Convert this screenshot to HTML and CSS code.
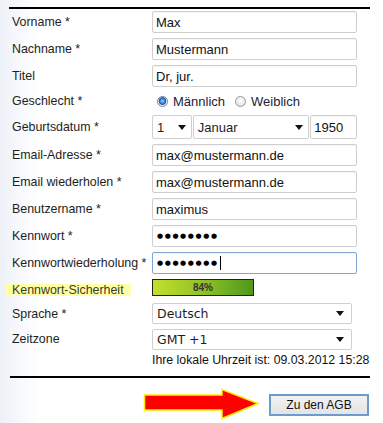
FILE: index.html
```html
<!DOCTYPE html>
<html lang="de">
<head>
<meta charset="utf-8">
<title>Registrierung</title>
<link rel="stylesheet" href="styles.css">
</head>
<body>
<div class="page">
  <div class="rule rule-top"></div>
  <form class="form">
    <label class="lbl">Vorname *</label>
    <div class="field"><div class="input">Max</div></div>

    <label class="lbl">Nachname *</label>
    <div class="field"><div class="input">Mustermann</div></div>

    <label class="lbl">Titel</label>
    <div class="field"><div class="input">Dr, jur.</div></div>

    <label class="lbl">Geschlecht *</label>
    <div class="field radios">
      <span class="radio checked"></span><span class="rlabel">Männlich</span>
      <span class="radio"></span><span class="rlabel">Weiblich</span>
    </div>

    <label class="lbl">Geburtsdatum *</label>
    <div class="field date">
      <div class="select sel-day"><span>1</span><span class="caret"></span></div>
      <div class="select sel-month"><span>Januar</span><span class="caret"></span></div>
      <div class="input year">1950</div>
    </div>

    <label class="lbl">Email-Adresse *</label>
    <div class="field"><div class="input">max@mustermann.de</div></div>

    <label class="lbl">Email wiederholen *</label>
    <div class="field"><div class="input">max@mustermann.de</div></div>

    <label class="lbl">Benutzername *</label>
    <div class="field"><div class="input">maximus</div></div>

    <label class="lbl">Kennwort *</label>
    <div class="field"><div class="input pw"><span class="dots">●●●●●●●●</span></div></div>

    <label class="lbl">Kennwortwiederholung *</label>
    <div class="field"><div class="input pw focus"><span class="dots">●●●●●●●●</span><span class="cursor"></span></div></div>

    <label class="lbl strength-lbl"><span class="hl">Kennwort-Sicherheit</span></label>
    <div class="field strength-field"><div class="strength">84%</div></div>

    <label class="lbl">Sprache *</label>
    <div class="field"><div class="select wide sys"><span>Deutsch</span><span class="caret"></span></div></div>

    <label class="lbl">Zeitzone</label>
    <div class="field"><div class="select wide sys"><span>GMT +1</span><span class="caret"></span></div></div>

    <div class="lbl"></div>
    <div class="field info">Ihre lokale Uhrzeit ist: 09.03.2012 15:28</div>
  </form>
  <div class="rule rule-bottom"></div>
  <div class="actions">
    <svg class="arrow" width="118" height="33" viewBox="0 0 118 33">
      <polygon points="1.5,7 79,7 79,1.5 115,15.5 79,30.5 79,22 1.5,22" fill="#ff0000" stroke="#ffee00" stroke-width="1.5" stroke-linejoin="miter"/>
    </svg>
    <button class="btn" type="button">Zu den AGB</button>
  </div>
</div>
</body>
</html>
```

FILE: styles.css
```css
html, body {
  margin: 0;
  padding: 0;
}
body {
  width: 383px;
  height: 423px;
  overflow: hidden;
  background: linear-gradient(to right, #edf1f8 0px, #f6f8fc 18px, #ffffff 40px);
  font-family: "Liberation Sans", Arial, sans-serif;
  color: #1e1e1e;
}
.page {
  padding-top: 7px;
}
.rule {
  background: #000;
}
.rule-top {
  height: 2px;
  margin-left: 9px;
  width: 361px;
}
.form {
  display: grid;
  grid-template-columns: 140px 205px;
  grid-template-rows: 22px 22px 22px 18px 24px 22px 22px 22px 22px 22px 19px 21px 20px 12px;
  row-gap: 5px;
  margin: 2px 0 0 12px;
}
.lbl {
  display: flex;
  align-items: center;
  font-size: 12.4px;
  white-space: nowrap;
}
.field {
  display: flex;
  align-items: center;
}
.input {
  box-sizing: border-box;
  width: 205px;
  height: 22px;
  border: 1px solid #cfcfcf;
  border-radius: 2px;
  background: #fff;
  box-shadow: inset 0 1px 1px rgba(0,0,0,0.04);
  font-size: 13px;
  padding: 0 3px;
  display: flex;
  align-items: center;
  color: #111;
}
.input.focus {
  border-color: #7ea6cf;
}
.pw {
  position: relative;
}
.dots {
  font-family: "DejaVu Sans", sans-serif;
  font-size: 7px;
  letter-spacing: 1.6px;
  color: #000;
  padding-left: 1px;
}
.cursor {
  display: inline-block;
  width: 1px;
  height: 14px;
  background: #000;
  margin-left: 1px;
}
.radios {
  padding-left: 5px;
}
.radio {
  box-sizing: border-box;
  width: 11px;
  height: 11px;
  border-radius: 50%;
  border: 1px solid #9a9a9a;
  background: radial-gradient(circle at 50% 40%, #ffffff 0%, #e9e9e9 60%, #cfcfcf 100%);
  display: inline-block;
}
.radio.checked {
  border-color: #6f7f95;
  background: radial-gradient(circle at 50% 45%, #9ed0ff 0px, #2f7fd8 2.5px, #1e4f9a 3.5px, #ffffff 4.2px, #dedede 100%);
}
.rlabel {
  font-size: 13px;
  color: #1c1c3a;
  margin: 0 10px 0 5px;
}
.date {
  gap: 0;
}
.select {
  box-sizing: border-box;
  height: 24px;
  border: 1px solid #cfcfcf;
  border-radius: 2px;
  background: #fff;
  display: flex;
  align-items: center;
  justify-content: space-between;
  font-size: 13px;
  padding: 0 5px 0 4px;
}
.sel-day {
  width: 40px;
  margin-right: 1px;
}
.sel-month {
  width: 117px;
  margin-right: 1px;
}
.input.year {
  width: 47px;
  height: 24px;
}
.caret {
  width: 0;
  height: 0;
  border-left: 4px solid transparent;
  border-right: 4px solid transparent;
  border-top: 5px solid #111;
}
.select.wide {
  width: 200px;
  padding: 0 7px 0 4px;
}
.select.sys {
  font-family: "DejaVu Sans", Verdana, sans-serif;
  font-size: 12.5px;
  height: 21px;
}
.strength-field {
  align-items: flex-start;
}
.strength {
  box-sizing: border-box;
  width: 102px;
  height: 17px;
  border: 1px solid #222;
  background: linear-gradient(to right, #c4df2c 0%, #8fc226 50%, #4f981c 100%);
  font-size: 10px;
  font-weight: bold;
  color: #333;
  display: flex;
  align-items: center;
  justify-content: center;
}
.strength-lbl {
  margin-left: -6px;
}
.hl {
  background: #ffffa6;
  color: #3a3a2a;
  padding: 0 7px 0 6px;
  line-height: 12px;
  display: inline-block;
  margin-top: 2px;
}
.info {
  font-size: 12.3px;
  white-space: nowrap;
  color: #111;
}
.rule-bottom {
  height: 2px;
  margin: 10px 0 0 10px;
  width: 360px;
}
.actions {
  display: flex;
  align-items: center;
  padding-left: 143px;
  margin-top: 10px;
  gap: 8px;
}
.arrow {
  display: block;
}
.btn {
  box-sizing: border-box;
  width: 100px;
  height: 22px;
  border: 2px solid #6d9bd0;
  background: linear-gradient(#f2f2f2, #e4e4e4);
  font-family: "Liberation Sans", Arial, sans-serif;
  font-size: 12px;
  color: #111;
  padding: 0;
  margin: 0;
}
```
